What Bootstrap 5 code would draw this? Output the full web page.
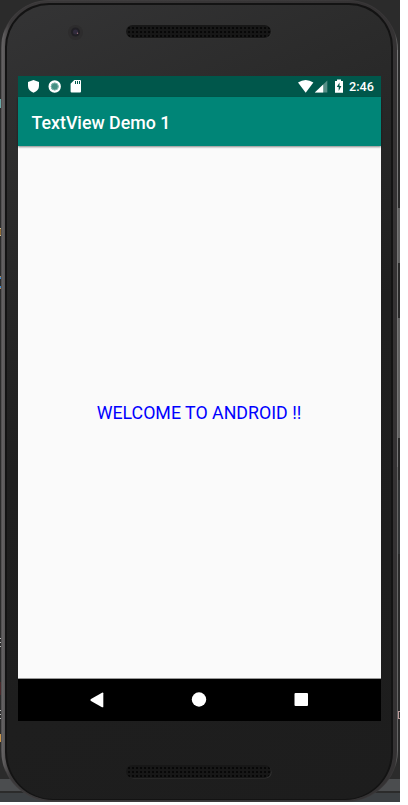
<!DOCTYPE html>
<html lang="en">
<head>
<meta charset="utf-8">
<meta name="viewport" content="width=device-width, initial-scale=1">
<title>TextView Demo 1</title>
<link href="https://cdn.jsdelivr.net/npm/bootstrap@5.3.0/dist/css/bootstrap.min.css" rel="stylesheet">
<style>
body{background:#fff;font-family:Roboto,"Liberation Sans",sans-serif;line-height:1}
.desk{width:400px;height:802px;background:linear-gradient(#2b2b2b 779px,#4b4d4f 779px,#4b4d4f 791px,#2b2b2b 791px,#2b2b2b 793px,#3c4043 793px)}
.edge{position:absolute;display:block}
.phone{position:absolute;left:1px;top:0;width:397px;height:802px;border-radius:48px 50px 52px 52px;padding:1px;background:linear-gradient(90deg,#4b494a 0,#656364 2px,#5c5a5b 3px,#403e3f 5px,#3a3839 391px,#3b3a3a 394px,#666 396px)}
.rim{border-radius:46px 48px 50px 50px;padding:2px 4px 1px 3px;background:linear-gradient(90deg,#656364,#5c5a5b 2px,#3a3839 8px,#343233)}
.face{border-radius:44px 44px 48px 48px;border:2px solid #131313;border-bottom-width:1px;background:linear-gradient(155deg,#343435 0,#2b2b2b 20%,#1f1f1f 48%,#1d1d1d 100%)}
.top-bezel{height:71px;flex:none}
.camera{position:absolute;left:67px;top:25px;width:15px;height:15px}
.speaker{width:145px;height:13px;border-radius:7px;background-color:#171717;background-image:radial-gradient(circle,#080808 .7px,transparent 1.1px);background-size:4px 4px;background-position:1px 1px;box-shadow:1px 1px 0 -.4px #333}
.speaker-top{margin:20px 0 0 119px}
.speaker-low{margin:44px 0 0 119px}
.screen{width:363px;margin-left:11px;background:#fafafa}
.status{height:21px;background:#00574b;color:#fff;font-size:12.7px;font-weight:500}
.clock{padding:1px 7px 0 5px}
.appbar{height:49px;background:#008577;color:#fff;font-size:17.8px;font-weight:500;padding:3px 0 0 13.500px;box-shadow:0 1px 2px #0007;position:relative}
.view{height:533px;color:#00f;font-size:17.8px;border-bottom:1px solid #999;padding:2px 1px 0 0}
.softkeys{height:42px;background:#000}
svg{display:block}
</style>
<script src="https://cdn.jsdelivr.net/npm/bootstrap@5.3.0/dist/js/bootstrap.bundle.min.js"></script>
</head>
<body>
<main class="desk position-relative overflow-hidden">
  <svg class="edge start-0 top-0" width="400" height="802" shape-rendering="crispEdges">
    <path fill="#69a9a6" d="M0 99h1v9H0z"/>
    <path fill="#916b33" d="M0 229h1v6H0z"/><path fill="#ccb78b" d="M0 228h1v1H0zM0 235h1v1H0z"/>
    <path fill="#3c88cd" d="M0 277h1v2H0zM0 286h1v2H0z"/><path fill="#b38654" d="M0 276h1v1H0zM0 288h1v1H0z"/>
    <path fill="#bbb" d="M0 638h1v1H0zM0 642h1v1H0zM0 646h1v1H0zM0 710h1v1H0zM0 714h1v1H0zM0 718h1v1H0z"/>
    <path fill="#4b292b" d="M0 682h1v13H0z"/><path fill="#c99448" d="M0 734h1v8H0z"/>
  </svg>
  <section class="phone">
    <div class="rim h-100"><div class="face h-100 d-flex flex-column">
      <header class="top-bezel d-flex align-items-start">
        <svg class="camera" viewBox="0 0 15 15"><circle cx="7.5" cy="7.5" r="7.5" fill="#2d2c2d"/><circle cx="7.5" cy="7" r="4.5" fill="#201f24"/><circle cx="7.5" cy="7" r="2.5" fill="#302b3c"/><circle cx="9.5" cy="8.3" r=".7" fill="#a0717d"/></svg>
        <div class="speaker speaker-top"></div>
      </header>
      <div class="screen flex-shrink-0">
        <div class="status d-flex align-items-center">
          <svg width="80" height="21" viewBox="0 0 80 21"><path fill="#fff" d="M15.500 4l5.500 2v4c0 3-2 5.500-5.500 6.800C12 15.500 10 13 10 10V6z"/><circle cx="36.700" cy="10.500" r="5" fill="#448f83" stroke="#fff" stroke-width="2.400"/><circle cx="36.700" cy="10.500" r="3.500" fill="none" stroke="#83b7af" stroke-width="1"/><path fill="#fff" d="M56.300 4H62q1 0 1 1v10.600q0 1-1 1h-8.400q-1 0-1-1V7.700z"/><path stroke="#00574b" d="M57.500 5v3M59.500 5v3M61.500 5v3"/></svg>
          <svg class="ms-auto" width="48" height="21" viewBox="0 0 48 21"><path fill="#fff" d="M9.700 16.800L2 6.600Q9.700 1.200 17.400 6.600z"/><path fill="#568f87" d="M31.300 4.500v12H18.800z"/><path fill="#fff" d="M27.200 8.500v8h-8.400z"/><path fill="#fff" d="M41 3.500h4V5h2v11.700h-8V5h2z"/><path fill="#00574b" d="M43.500 6.500L40.800 11h1.900v4l2.700-5h-1.900z"/></svg>
          <span class="clock text-nowrap">2:46</span>
        </div>
        <div class="appbar d-flex align-items-center"><span>TextView Demo 1</span></div>
        <div class="view d-flex align-items-center justify-content-center"><span>WELCOME TO ANDROID !!</span></div>
        <nav class="softkeys d-flex">
          <svg width="363" height="42" viewBox="0 0 363 42" fill="#fff"><path d="M84 13.700q1.300-.5 1.300.5v13.500q0 1-1.300.5l-11-6.200q-1.500-1 0-2z"/><circle cx="181" cy="20.500" r="7.200"/><rect x="276.500" y="14" width="13.500" height="13" rx="1"/></svg>
        </nav>
      </div>
      <div class="speaker speaker-low"></div>
    </div></div>
  </section>
  <svg class="edge start-0 top-0" width="400" height="802" shape-rendering="crispEdges"><path fill="#606060" d="M397 208h3v55h-3zM397 318h3v120h-3z"/><path fill="#777" d="M397 50h1v417h-1z"/><path fill="#343637" d="M398 480h2v74h-2z"/><path d="M400 711h-2v7h2" fill="none" stroke="#b99"/></svg>
</main>
</body>
</html>
